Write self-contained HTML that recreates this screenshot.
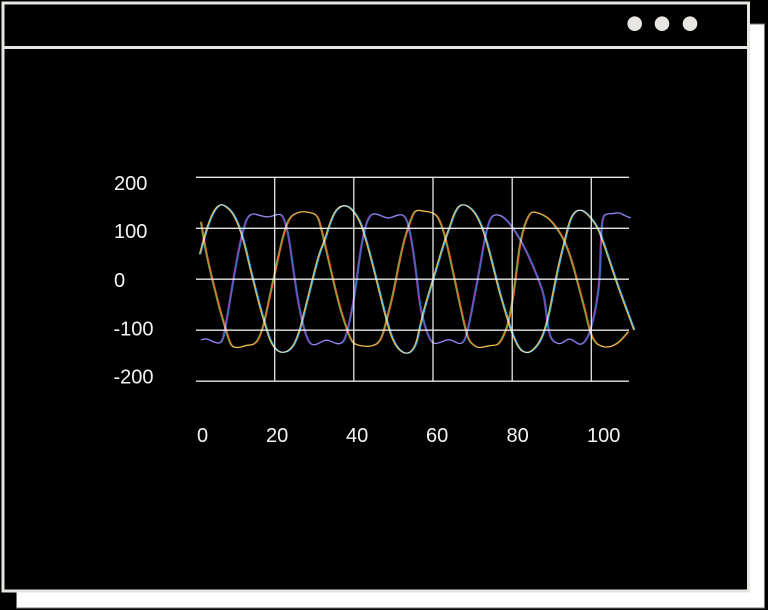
<!DOCTYPE html>
<html>
<head>
<meta charset="utf-8">
<style>
html,body{margin:0;padding:0;background:#000;width:768px;height:610px;overflow:hidden}
svg{display:block}
text{font-family:"Liberation Sans",sans-serif;font-size:20px;fill:#f4f4f4}
.s{fill:none;stroke-linejoin:round;stroke-linecap:butt;stroke-width:3.6;mix-blend-mode:screen}
</style>
</head>
<body>
<svg width="768" height="610" viewBox="0 0 768 610" xmlns="http://www.w3.org/2000/svg" style="isolation:isolate">
<defs>
<path id="a" d="M33 510Q45 505 52.5 507.5 60 510 67.5 514 75 518 82.5 519 90 520 94 515 98 510 101.5 495 105 480 112.5 435 120 390 127.5 345 135 300 142.5 260 150 220 157.5 190 165 160 170 149 175 138 182.5 134 190 130 200 133.5 210 137 222.5 139.5 235 142 245 138.5 255 135 262.5 133.5 270 132 275 136 280 140 287.5 165 295 190 302.5 245 310 300 317.5 350 325 400 332.5 435 340 470 347.5 492.5 355 515 362.5 521 370 527 380 522.5 390 518 400 513 410 508 420 513 430 518 440 520.5 450 523 457.5 516.5 465 510 472.5 480 480 450 487.5 410 495 370 502.5 310 510 250 517.5 210 525 170 532.5 152.5 540 135 547.5 132.5 555 130 565 134 575 138 585 142 595 146 605 142 615 138 625 135 635 132 642.5 138.5 650 145 657.5 177.5 665 210 672.5 265 680 320 685 365 690 410 697.5 440 705 470 712.5 490 720 510 726 516 732 522 741 520 750 518 762.5 512.5 775 507 785 511 795 515 802.5 519 810 523 817.5 517.5 825 512 832.5 481 840 450 847.5 410 855 370 862.5 330 870 290 877.5 245 885 200 892.5 172.5 900 145 907.5 139 915 133 925 135 935 137 945 146 955 155 967.5 172.5 980 190 992.5 212.5 1005 235 1017.5 262.5 1030 290 1040 315 1050 340 1056.5 360 1063 380 1066.5 410 1070 440 1074 467.5 1078 495 1084 505 1090 515 1100 519 1110 523 1117.5 518 1125 513 1131.5 509 1138 505 1146.5 510 1155 515 1163.5 520.5 1172 526 1181 518 1190 510 1197.5 490 1205 470 1212.5 435 1220 400 1225 360 1230 320 1231.5 260 1233 200 1235.5 170 1238 140 1244 135.5 1250 131 1260 131 1270 131 1279 129 1288 127 1296.5 132.5 1305 138 1322 144"/>
<path id="b" d="M30 253Q45 195 52.5 172.5 60 150 67.5 134 75 118 82.5 111 90 104 95 104 100 104 110 111 120 118 127.5 129 135 140 142.5 157.5 150 175 157.5 200 165 225 172.5 257.5 180 290 187.5 320 195 350 202.5 380 210 410 217.5 435 225 460 232.5 485 240 510 247.5 522.5 255 535 262.5 541 270 547 277.5 547 285 547 292.5 543.5 300 540 307.5 530 315 520 322.5 500 330 480 337.5 450 345 420 352.5 390 360 360 367.5 330 375 300 382.5 272.5 390 245 397.5 227.5 405 210 412.5 185 420 160 427.5 142.5 435 125 442.5 117.5 450 110 457.5 108 465 106 472.5 109 480 112 490 123.5 500 135 507.5 150 515 165 522.5 190 530 215 537.5 242.5 545 270 552.5 300 560 330 567.5 360 575 390 582.5 420 590 450 597.5 475 605 500 612.5 515 620 530 627.5 537.5 635 545 642.5 548 650 551 657.5 548 665 545 672.5 532.5 680 520 685 495 690 470 697.5 440 705 410 712.5 385 720 360 727.5 335 735 310 742.5 285 750 260 757.5 235 765 210 772.5 190 780 170 787.5 147.5 795 125 802.5 115 810 105 817.5 104.5 825 104 832.5 108 840 112 847.5 120 855 128 862.5 141.5 870 155 877.5 175 885 195 892.5 222.5 900 250 907.5 280 915 310 922.5 340 930 370 937.5 395 945 420 952.5 445 960 470 967.5 490 975 510 982.5 524 990 538 997.5 543 1005 548 1012.5 547.5 1020 547 1027.5 541 1035 535 1042.5 525 1050 515 1057.5 497.5 1065 480 1072.5 450 1080 420 1087.5 380 1095 340 1102.5 305 1110 270 1117.5 240 1125 210 1132.5 180 1140 150 1147.5 137.5 1155 125 1162.5 122 1170 119 1177.5 122 1185 125 1195 135 1205 145 1215 160 1225 175 1235 202.5 1245 230 1255 260 1265 290 1275 320 1285 350 1295 377 1305 404 1312.5 424.5L1333 480"/>
<path id="c" d="M33 155Q45 230 52.5 265 60 300 67.5 330 75 360 82.5 390 90 420 97.5 445 105 470 112.5 495 120 520 125 526 130 532 140 532.5 150 533 160 529 170 525 180 525 190 525 197.5 517.5 205 510 212.5 490 220 470 227.5 435 235 400 242.5 365 250 330 257.5 295 265 260 272.5 227.5 280 195 287.5 172.5 295 150 302.5 141.5 310 133 322.5 128.5 335 124 347.5 125.5 360 127 371.5 131 383 135 389 157.5 395 180 402.5 212.5 410 245 417.5 277.5 425 310 432.5 342.5 440 375 447.5 402.5 455 430 462.5 452.5 470 475 477.5 495 485 515 492.5 520 500 525 515 527.5 530 530 540 528.5 550 527 558.5 522.5 567 518 573.5 504 580 490 587.5 460 595 430 602.5 400 610 370 617.5 330 625 290 632.5 255 640 220 647.5 195 655 170 662.5 150 670 130 675 125 680 120 690 121.5 700 123 715 125.5 730 128 737.5 135 745 142 752.5 161 760 180 767.5 210 775 240 782.5 275 790 310 797.5 345 805 380 812.5 415 820 450 827.5 480 835 510 842.5 517.5 850 525 857.5 529.5 865 534 875 532 885 530 895 528 905 526 915 525.5 925 525 932.5 512.5 940 500 947.5 480 955 460 962.5 420 970 380 975 340 980 300 985 260 990 220 997.5 190 1005 160 1012.5 145 1020 130 1025 127.5 1030 125 1042.5 128.5 1055 132 1067.5 140 1080 148 1092.5 164 1105 180 1115 197.5 1125 215 1135 242.5 1145 270 1155 307.5 1165 345 1175 382.5 1185 420 1192.5 452.5 1200 485 1207.5 501.5 1215 518 1225 524 1235 530 1245 531 1255 532 1265 528.5 1275 525 1285 517.5 1295 510 1315 485"/>
</defs>

<rect width="768" height="610" fill="#000"/>
<rect x="16.5" y="24" width="748" height="584" fill="#fff" stroke="#777" stroke-width="1"/>
<rect x="3" y="3" width="745.5" height="588" fill="#000" stroke="#e8e6e3" stroke-width="3"/>
<rect x="3" y="46" width="745" height="3" fill="#e8e6e3"/>
<circle cx="634.7" cy="23.7" r="7.3" fill="#e8e6e3"/>
<circle cx="662" cy="23.7" r="7.3" fill="#e8e6e3"/>
<circle cx="690" cy="23.7" r="7.3" fill="#e8e6e3"/>

<g stroke="#e6e6e6" stroke-width="1.3">
<line x1="196" x2="629" y1="177.3" y2="177.3"/>
<line x1="196" x2="629" y1="228.3" y2="228.3"/>
<line x1="196" x2="629" y1="279.2" y2="279.2"/>
<line x1="196" x2="629" y1="330.2" y2="330.2"/>
<line x1="196" x2="629" y1="381.2" y2="381.2"/>
<line x1="274.7" x2="274.7" y1="177" y2="381.5"/>
<line x1="353.8" x2="353.8" y1="177" y2="381.5"/>
<line x1="433" x2="433" y1="177" y2="381.5"/>
<line x1="512.2" x2="512.2" y1="177" y2="381.5"/>
<line x1="591.3" x2="591.3" y1="177" y2="381.5"/>
</g>

<text x="114" y="190">200</text>
<text x="114" y="238">100</text>
<text x="114" y="287">0</text>
<text x="113.5" y="335.5">-100</text>
<text x="113.5" y="383.5">-200</text>
<text x="197" y="442">0</text>
<text x="266" y="442">20</text>
<text x="346" y="442">40</text>
<text x="426" y="442">60</text>
<text x="506.5" y="442">80</text>
<text x="587" y="442">100</text>

<g transform="translate(189.45 170) scale(.33333)">
<use href="#a" class="s" stroke="#8a3aa8"/><use href="#b" class="s" stroke="#d8b850"/><use href="#c" class="s" stroke="#7a9c48"/>
</g>
<g transform="translate(190.55 170) scale(.33333)">
<use href="#a" class="s" stroke="#2f6cc8"/><use href="#b" class="s" stroke="#40b0e0"/><use href="#c" class="s" stroke="#e06418"/>
</g>
</svg>
</body>
</html>
